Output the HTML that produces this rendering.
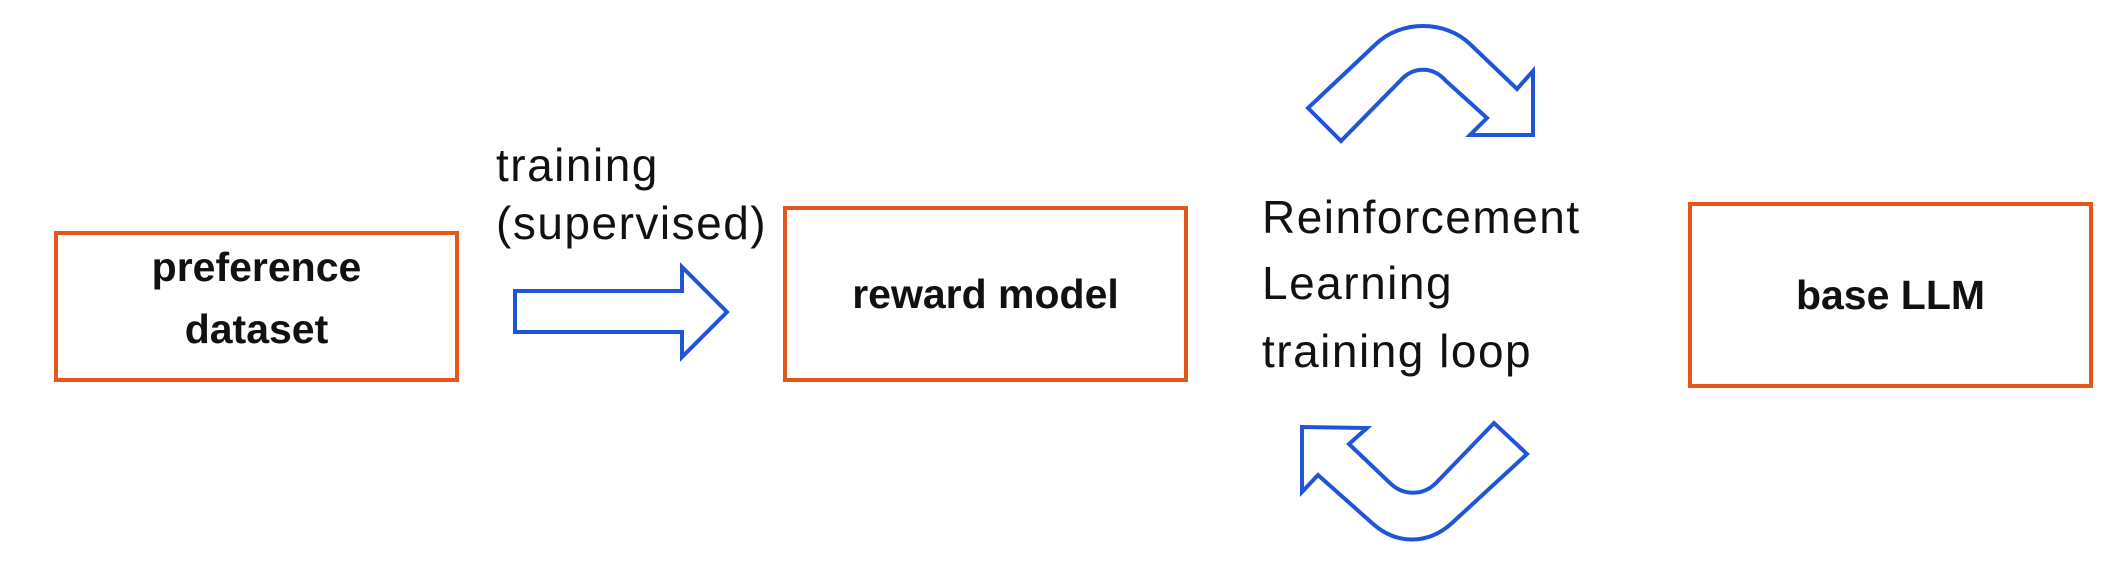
<!DOCTYPE html>
<html><head><style>
html,body{margin:0;padding:0;background:#fff;}
body{width:2116px;height:565px;position:relative;overflow:hidden;font-family:"Liberation Sans",sans-serif;color:#111;}
.box{position:absolute;border:4px solid #e5561c;box-sizing:border-box;display:flex;align-items:center;justify-content:center;text-align:center;font-weight:bold;font-size:41px;line-height:62px;}
.t{position:absolute;font-size:46px;white-space:nowrap;letter-spacing:1.5px;}
</style></head><body>
<div class="box" style="left:54px;top:231px;width:405px;height:151px;padding-bottom:18px;">preference<br>dataset</div>
<div class="box" style="left:783px;top:206px;width:405px;height:176px;">reward model</div>
<div class="box" style="left:1688px;top:202px;width:405px;height:186px;">base LLM</div>
<div class="t" style="left:496px;top:138px;">training</div>
<div class="t" style="left:496px;top:196px;">(supervised)</div>
<div class="t" style="left:1262px;top:190px;">Reinforcement</div>
<div class="t" style="left:1262px;top:256px;">Learning</div>
<div class="t" style="left:1262px;top:324px;">training loop</div>
<svg width="2116" height="565" style="position:absolute;left:0;top:0" fill="none" stroke="#1f55d6" stroke-width="4" stroke-linejoin="miter">
<path d="M515 291 L682 291 L682 267 L727 312 L682 357 L682 332 L515 332 Z"/>
<path d="M1308 108 L1341 141 L1400 81 C1413 66 1433 66 1446 81 L1487 118 L1470 135 L1533 135 L1533 71 L1517 89 L1470 44 C1445 20 1401 20 1376 44 Z"/>
<path d="M1302 427 L1367 428 L1349 444 L1390 483 C1403 496 1423 496 1436 483 L1494 423 L1527 454 L1452 523 C1428 545 1396 545 1372 523 L1318 475 L1302 492 Z"/>
</svg>
</body></html>
